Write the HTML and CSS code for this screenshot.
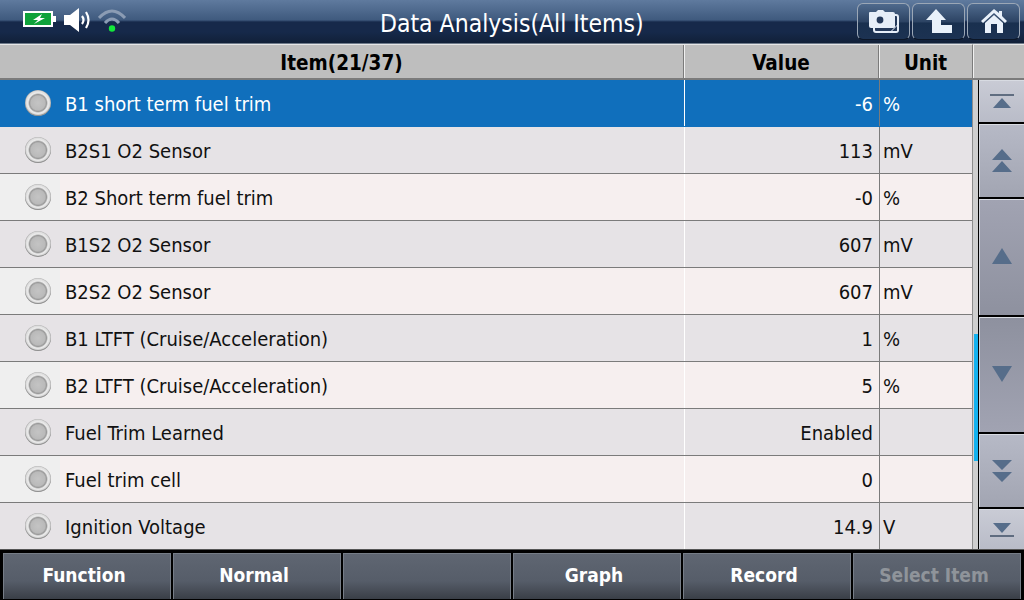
FILE: index.html
```html
<!DOCTYPE html>
<html lang="en">
<head>
<meta charset="utf-8">
<title>Data Analysis</title>
<link rel="stylesheet" href="styles.css">
</head>
<body>
<div class="app">
  <header class="topbar">
    <div class="status">
      <svg class="ic-batt" width="34" height="18" viewBox="0 0 34 18"><rect x="0" y="0" width="30" height="16" fill="#fff"/><rect x="2" y="2" width="26" height="12" fill="#0fa23a"/><rect x="30" y="5" width="3" height="6" fill="#fff"/><path d="M19 3 L10 9 H15 L11 13 L22 7 H17 Z" fill="#fff"/></svg>
      <svg class="ic-vol" width="28" height="26" viewBox="0 0 28 26"><path d="M0 8 H6 L15 1 V25 L6 18 H0 Z" fill="#fff"/><path d="M18 9 Q21 13 18 17 M22 5 Q27 13 22 21" fill="none" stroke="#fff" stroke-width="2.2"/></svg>
      <svg class="ic-wifi" width="28" height="26" viewBox="0 0 28 26"><path d="M1 11 Q14 -3 27 11 M7 16 Q14 8 21 16" fill="none" stroke="#8b9cb4" stroke-width="3"/><circle cx="14" cy="21.5" r="3.2" fill="#13e83a"/></svg>
    </div>
    <h1 class="title">Data Analysis(All Items)</h1>
    <div class="actions">
      <button class="tb"><svg width="32" height="24" viewBox="0 0 32 24"><rect x="6" y="5" width="24" height="17" rx="2" fill="#24395a" stroke="#e6eef8" stroke-width="2"/><path d="M22 22 L30 14 V22 Z" fill="#e6eef8"/><path d="M24 21 L29 16 V21 Z" fill="#24395a"/><path d="M1 3 Q1 2 2 2 H8 L10 0 H15 L17 2 H25 Q27 2 27 4 V17 Q27 18 25 18 H3 Q1 18 1 16 Z" fill="#e6eef8"/><circle cx="12" cy="10" r="3.4" fill="#24395a"/></svg></button>
      <button class="tb"><svg width="26" height="25" viewBox="0 0 26 25"><path d="M10 0 L20 11 H15 V16 H26 V24 H6 V11 H0 Z" fill="#e9f1fa"/></svg></button>
      <button class="tb"><svg width="26" height="25" viewBox="0 0 26 25"><path d="M13 0 L18 4 V2 H21 V7 L26 12 L24 14 L13 4 L2 14 L0 12 Z" fill="#e9f1fa"/><path d="M4 14 L13 6 L22 14 V24 H16 V15 H10 V24 H4 Z" fill="#e9f1fa"/></svg></button>
    </div>
  </header>

  <main class="body">
    <div class="table">
      <div class="row head">
        <div class="c item">Item(21/37)</div>
        <div class="c val">Value</div>
        <div class="c unit">Unit</div>
      </div>
      <div class="row sel"><div class="c item"><span class="led"></span><span>B1 short term fuel trim</span></div><div class="c val">-6</div><div class="c unit">%</div></div>
      <div class="row even"><div class="c item"><span class="led"></span><span>B2S1 O2 Sensor</span></div><div class="c val">113</div><div class="c unit">mV</div></div>
      <div class="row odd"><div class="c item"><span class="led"></span><span>B2 Short term fuel trim</span></div><div class="c val">-0</div><div class="c unit">%</div></div>
      <div class="row even"><div class="c item"><span class="led"></span><span>B1S2 O2 Sensor</span></div><div class="c val">607</div><div class="c unit">mV</div></div>
      <div class="row odd"><div class="c item"><span class="led"></span><span>B2S2 O2 Sensor</span></div><div class="c val">607</div><div class="c unit">mV</div></div>
      <div class="row even"><div class="c item"><span class="led"></span><span>B1 LTFT (Cruise/Acceleration)</span></div><div class="c val">1</div><div class="c unit">%</div></div>
      <div class="row odd"><div class="c item"><span class="led"></span><span>B2 LTFT (Cruise/Acceleration)</span></div><div class="c val">5</div><div class="c unit">%</div></div>
      <div class="row even"><div class="c item"><span class="led"></span><span>Fuel Trim Learned</span></div><div class="c val">Enabled</div><div class="c unit"></div></div>
      <div class="row odd"><div class="c item"><span class="led"></span><span>Fuel trim cell</span></div><div class="c val">0</div><div class="c unit"></div></div>
      <div class="row even last"><div class="c item"><span class="led"></span><span>Ignition Voltage</span></div><div class="c val">14.9</div><div class="c unit">V</div></div>
    </div>
    <aside class="side">
      <div class="side-head"></div>
      <div class="side-body">
        <div class="track"><div class="thumb"></div></div>
        <div class="btns">
          <button class="sb s1"><svg width="24" height="16" viewBox="0 0 24 16"><path d="M0 1 H24" stroke="#3f4f66" stroke-width="1.5"/><path d="M12 4 L21 14 H3 Z" fill="#566d8a"/></svg></button>
          <button class="sb s2"><svg width="20" height="24" viewBox="0 0 20 24"><path d="M10 0 L20 11 H0 Z M10 12 L20 23 H0 Z" fill="#566d8a"/></svg></button>
          <button class="sb s3 s3a"><svg width="20" height="16" viewBox="0 0 20 16"><path d="M10 0 L20 16 H0 Z" fill="#566d8a"/></svg></button>
          <button class="sb s3 s3b"><svg width="20" height="16" viewBox="0 0 20 16"><path d="M0 0 H20 L10 16 Z" fill="#566d8a"/></svg></button>
          <button class="sb s2"><svg width="20" height="24" viewBox="0 0 20 24"><path d="M0 1 H20 L10 11 Z M0 13 H20 L10 23 Z" fill="#566d8a"/></svg></button>
          <button class="sb s1"><svg width="24" height="16" viewBox="0 0 24 16"><path d="M3 1 H21 L12 11 Z" fill="#566d8a"/><path d="M0 14 H24" stroke="#3f4f66" stroke-width="1.5"/></svg></button>
        </div>
      </div>
    </aside>
  </main>

  <footer class="bottom">
    <button class="fb">Function</button>
    <button class="fb">Normal</button>
    <button class="fb"></button>
    <button class="fb">Graph</button>
    <button class="fb">Record</button>
    <button class="fb off">Select Item</button>
  </footer>
</div>
</body>
</html>
```

FILE: styles.css
```css
* { box-sizing: border-box; }
html, body { margin: 0; padding: 0; }
body { width: 1024px; height: 600px; overflow: hidden; background: #000; }
.app { width: 1024px; height: 600px; display: flex; flex-direction: column; font-family: "DejaVu Sans Condensed", "DejaVu Sans", sans-serif; }

.topbar { height: 44px; flex: none; display: flex; align-items: flex-start; border-bottom: 1px solid #6e7a8a;
  background: linear-gradient(#5f7a9e 0, #3f5a7e 20px, #16294a 22px, #16294a 32px, #112038 100%); }
.status { display: flex; align-items: center; padding-left: 23px; gap: 7px; height: 40px; width: 240px; }
.ic-wifi { margin-left: -1px; }
.title { margin: 0; flex: 1; margin-left: 140px; font-size: 24.5px; font-weight: normal; color: #fff; white-space: nowrap; line-height: 47px; }
.actions { display: flex; gap: 2px; padding: 3px 4px 0 0; }
.tb { width: 53px; height: 37px; padding: 0; display: flex; align-items: center; justify-content: center; border: 1px solid #9ba7b6; border-bottom-color: #0c1626; border-radius: 6px;
  background: linear-gradient(#4f6a8d, #2d4464 50%, #19304f 55%, #1c3252); }

.body { height: 505px; flex: none; display: flex; }
.table { width: 972px; flex: none; display: flex; flex-direction: column; }
.row { display: flex; height: 47px; flex: none; font-size: 20px; line-height: 24px; color: #111; border-bottom: 1px solid #7b7b7b; }
.c { display: flex; align-items: center; white-space: nowrap; padding-top: 2px; }
.item { width: 684px; padding-left: 25px; flex: none; }
.val { width: 195px; flex: none; justify-content: flex-end; padding-right: 6px; border-left: 1px solid #fff; }
.unit { width: 93px; flex: none; padding-left: 3px; border-left: 1px solid #7b7b7b; }
.led { width: 26px; height: 26px; border-radius: 50%; margin: -2px 14px 0 0; flex: none;
  background: radial-gradient(circle, #c4c4c4 0, #bababa 7px, #9a9a9a 8.5px, #ececec 10px, #dcdcdc 12px, #b0b0b0 13px);
  box-shadow: inset 0 -1px 1px #8a8a8a; }

.head { height: 36px; background: #bebebe; color: #000; font-size: 20.5px; font-weight: bold; border-top: 1px solid #e6e6e6; border-bottom: 2px solid #7b7b7b; }
.head .c { justify-content: center; padding: 3px 0 0; border-left: 1px solid #7b7b7b; box-shadow: inset 1px 0 0 #f0f0f0; }
.head .item { width: 683px; border-left: 0; box-shadow: none; }
.head .val { width: 195px; }
.head .unit { width: 94px; }

.sel { background: #106fbc; color: #fff; border-bottom-color: #106fbc; }
.even { background: #e6e3e6; }
.odd { background: linear-gradient(90deg, #efefef 60px, #f6efef 60px); }
.last { border-bottom: 0; height: 46px; }

.side { width: 52px; flex: none; display: flex; flex-direction: column; }
.side-head { height: 36px; flex: none; background: #bebebe; border-top: 1px solid #e6e6e6; border-bottom: 2px solid #7b7b7b; border-left: 1px solid #7b7b7b; box-shadow: inset 1px 0 0 #f0f0f0; }
.side-body { flex: 1; display: flex; background: #000; }
.track { width: 6px; flex: none; background: #cfcfcf; border-left: 1px solid #8d8d8d; position: relative; }
.thumb { position: absolute; left: 1px; top: 254px; width: 4px; height: 127px; background: #14b2ef; }
.btns { flex: 1; display: flex; flex-direction: column; gap: 2px; padding-left: 1px; }
.sb { padding: 0; display: flex; align-items: center; justify-content: center; border: 0; border-top: 1px solid #d8dbe2; border-left: 1px solid #cfd2da; }
.s1 { height: 42px; background: linear-gradient(#c9cbd5, #b9bcc8); }
.btns .s1:last-child { height: 40px; }
.s2 { height: 73px; background: linear-gradient(#b6b9c6, #a2a5b2); }
.s3 { height: 116px; background: linear-gradient(#a1a3b2, #8e919f); }
.s3a { padding-bottom: 3px; }
.s3b { height: 115px; padding-bottom: 2px; background: linear-gradient(#8e919f, #a1a3b2); }

.bottom { flex: 1; display: flex; background: #000; gap: 2px; padding: 3px 3px 1px 3px; border-top: 1px solid #555; }
.fb { flex: 1 1 0; padding: 0 6px 3px 0; border: 1px solid #767d87; border-bottom: 0; color: #fff; font: bold 19px "DejaVu Sans Condensed", "DejaVu Sans", sans-serif;
  background: linear-gradient(#5f6672, #565d69 60%, #3a3f47); }
.off { color: #8f949a; }
```
